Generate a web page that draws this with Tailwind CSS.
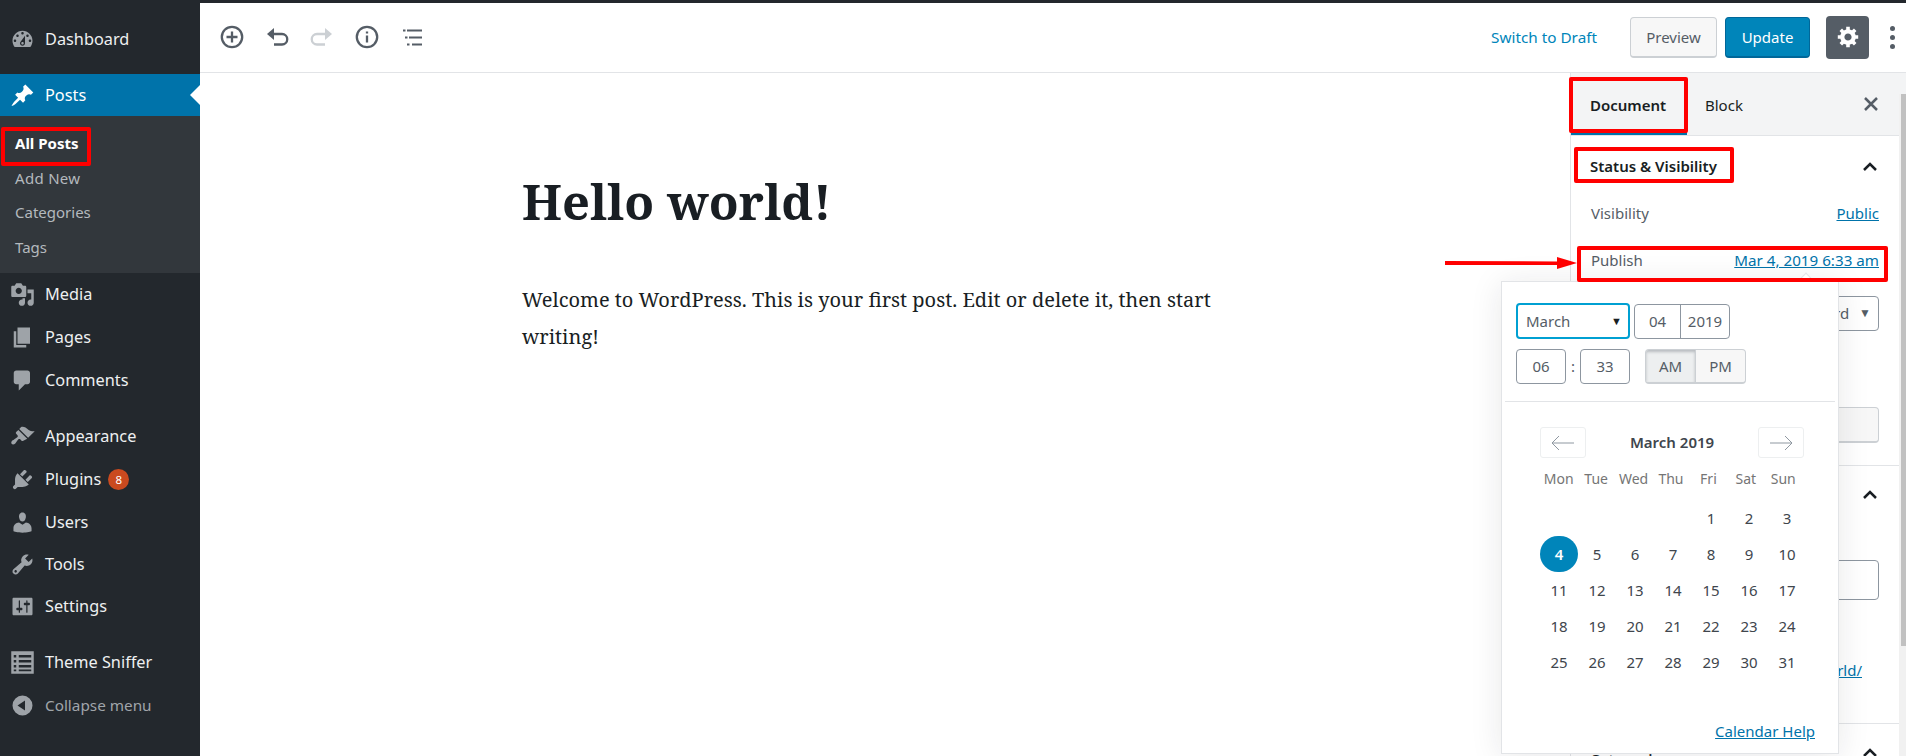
<!DOCTYPE html>
<html lang="en">
<head>
<meta charset="utf-8">
<title>Edit Post</title>
<script src="https://cdn.jsdelivr.net/npm/@tailwindcss/browser@4"></script>
</head>
<body class="m-0 overflow-hidden bg-white font-['Noto_Sans',sans-serif]">
<div class="relative flex h-[756px] w-[1906px] overflow-hidden">
  <!-- Admin menu -->
  <nav class="flex h-full w-[200px] shrink-0 flex-col bg-[#23282d] pt-[18px] text-[16.3px] text-[#eef0f1]">
    <a class="flex h-[42px] items-center"><span class="flex w-[45px] justify-center"><svg class="h-[25px] w-[25px] fill-[#9ea3a8]" viewBox="0 0 20 20"><path d="M3.76 16h12.48c1.1-1.37 1.76-3.11 1.76-5 0-4.42-3.58-8-8-8s-8 3.58-8 8c0 1.89.66 3.63 1.76 5zM10 4c.55 0 1 .45 1 1s-.45 1-1 1-1-.45-1-1 .45-1 1-1zM6 6c.55 0 1 .45 1 1s-.45 1-1 1-1-.45-1-1 .45-1 1-1zm8 0c.55 0 1 .45 1 1s-.45 1-1 1-1-.45-1-1 .45-1 1-1zm-5.37 5.55L12 7v6c0 1.1-.9 2-2 2s-2-.9-2-2c0-.57.24-1.08.63-1.45zM4 10c.55 0 1 .45 1 1s-.45 1-1 1-1-.45-1-1 .45-1 1-1zm12 0c.55 0 1 .45 1 1s-.45 1-1 1-1-.45-1-1 .45-1 1-1zm-5 3c0-.55-.45-1-1-1s-1 .45-1 1 .45 1 1 1 1-.45 1-1z"/></svg></span>Dashboard</a>
    <a class="relative mt-[14px] flex h-[42px] items-center bg-[#0073aa] text-white"><span class="flex w-[45px] justify-center"><svg class="h-[25px] w-[25px] fill-white" viewBox="0 0 20 20"><path d="M10.44 3.02l1.82-1.82 6.36 6.35-1.83 1.82c-1.05-.68-2.48-.57-3.41.36l-.75.75c-.92.93-1.04 2.35-.35 3.41l-1.83 1.82-2.41-2.41-2.8 2.79c-.42.42-3.38 2.71-3.8 2.29s1.86-3.39 2.28-3.81l2.79-2.79L4.1 9.36l1.83-1.82c1.05.69 2.48.57 3.4-.36l.75-.75c.93-.92 1.05-2.35.36-3.41z"/></svg></span>Posts<span class="absolute right-0 top-[11px] h-0 w-0 border-y-[10px] border-r-[10px] border-y-transparent border-r-white"></span></a>
    <div class="flex h-[157px] flex-col bg-[#32373c] pt-[10px] pl-[15px] text-[15px] text-[#b4b9be]">
      <a class="flex h-[34.7px] items-center font-bold text-white">All Posts</a>
      <a class="flex h-[34.7px] items-center tracking-[0.3px]">Add New</a>
      <a class="flex h-[34.7px] items-center">Categories</a>
      <a class="flex h-[34.7px] items-center">Tags</a>
    </div>
    <a class="flex h-[43px] items-center"><span class="flex w-[45px] justify-center"><svg class="h-[25px] w-[25px] fill-[#9ea3a8]" viewBox="0 0 20 20"><path d="M13 11V4c0-.55-.45-1-1-1h-1.67L9 1H5L3.67 3H2c-.55 0-1 .45-1 1v7c0 .55.45 1 1 1h10c.55 0 1-.45 1-1zM7 4.5c1.38 0 2.5 1.12 2.5 2.5S8.38 9.5 7 9.5 4.5 8.38 4.5 7 5.62 4.5 7 4.5zM14 6h5v10.5c0 1.38-1.12 2.5-2.5 2.5S14 17.88 14 16.5s1.12-2.5 2.5-2.5c.17 0 .34.02.5.05V9h-3V6zm-4 8.05V13h2v3.5c0 1.38-1.12 2.5-2.5 2.5S7 17.88 7 16.5 8.12 14 9.5 14c.17 0 .34.02.5.05z"/></svg></span>Media</a>
    <a class="flex h-[43px] items-center"><span class="flex w-[45px] justify-center"><svg class="h-[25px] w-[25px] fill-[#9ea3a8]" viewBox="0 0 20 20"><path d="M6 15V2h10v13H6zm-1 1h8v2H3V5h2v11z"/></svg></span>Pages</a>
    <a class="flex h-[42px] items-center"><span class="flex w-[45px] justify-center"><svg class="h-[25px] w-[25px] fill-[#9ea3a8]" viewBox="0 0 20 20"><path d="M5 2h9c1.1 0 2 .9 2 2v7c0 1.1-.9 2-2 2h-2l-5 5v-5H5c-1.1 0-2-.9-2-2V4c0-1.1.9-2 2-2z"/></svg></span>Comments</a>
    <a class="mt-[14px] flex h-[43px] items-center"><span class="flex w-[45px] justify-center"><svg class="h-[25px] w-[25px] fill-[#9ea3a8]" viewBox="0 0 20 20"><path d="M14.48 11.06L7.41 3.99l1.5-1.5c.5-.56 2.3-.47 3.51.32 1.21.8 1.43 1.28 2.91 2.1 1.18.64 2.45 1.26 4.45.85zm-.71.71L6.7 4.7 4.93 6.47c-.39.39-.39 1.02 0 1.41l1.06 1.06c.39.39.39 1.03 0 1.42-.6.6-1.43 1.11-2.21 1.69-.35.26-.7.53-1.01.84C1.43 13.23.4 14.96 1.5 16.06c.69.69 1.91.25 2.73-.55.31-.31.58-.66.85-1.02.57-.78 1.08-1.61 1.69-2.21.39-.39 1.02-.39 1.41 0l1.06 1.06c.39.39 1.02.39 1.41 0z"/></svg></span>Appearance</a>
    <a class="flex h-[43px] items-center"><span class="flex w-[45px] justify-center"><svg class="h-[25px] w-[25px] fill-[#9ea3a8]" viewBox="0 0 20 20"><path d="M13.11 4.36L9.87 7.6 8 5.73l3.24-3.24c.35-.34 1.05-.2 1.56.32.52.51.66 1.21.31 1.55zm-8 1.77l.91-1.12 9.01 9.01-1.19.84c-.71.71-2.63 1.16-3.82 1.16H6.14L4.9 17.26c-.59.59-1.54.59-2.12 0-.59-.58-.59-1.53 0-2.12l1.24-1.24v-3.88c0-1.13.4-3.19 1.09-3.89zm7.26 3.97l3.24-3.24c.34-.35 1.04-.21 1.55.31.52.51.66 1.21.31 1.55l-3.24 3.25z"/></svg></span>Plugins<span class="ml-[7px] flex h-[21px] w-[21px] items-center justify-center rounded-full bg-[#ca4a1f] text-[11.5px] text-white">8</span></a>
    <a class="flex h-[42px] items-center"><span class="flex w-[45px] justify-center"><svg class="h-[25px] w-[25px] fill-[#9ea3a8]" viewBox="0 0 20 20"><path d="M10 9.25c-2.27 0-2.73-3.44-2.73-3.44C7 4.02 7.82 2 9.97 2c2.16 0 2.98 2.02 2.71 3.81 0 0-.41 3.44-2.68 3.44zm0 2.57L12.72 10c2.39 0 4.52 2.33 4.52 4.53v2.49s-3.65 1.13-7.24 1.13c-3.65 0-7.24-1.13-7.24-1.13v-2.49c0-2.25 1.94-4.48 4.47-4.48z"/></svg></span>Users</a>
    <a class="flex h-[42px] items-center"><span class="flex w-[45px] justify-center"><svg class="h-[25px] w-[25px] fill-[#9ea3a8]" viewBox="0 0 20 20"><path d="M16.68 9.77c-1.34 1.34-3.3 1.67-4.95.99l-5.41 6.52c-.99.99-2.59.99-3.58 0s-.99-2.59 0-3.57l6.52-5.42c-.68-1.65-.35-3.61.99-4.95 1.28-1.28 3.12-1.62 4.72-1.06l-2.89 2.89 2.82 2.82 2.86-2.87c.53 1.58.18 3.39-1.08 4.65zM3.81 16.21c.4.39 1.04.39 1.43 0 .4-.4.4-1.04 0-1.43-.39-.4-1.03-.4-1.43 0-.39.39-.39 1.03 0 1.43z"/></svg></span>Tools</a>
    <a class="flex h-[43px] items-center"><span class="flex w-[45px] justify-center"><svg class="h-[25px] w-[25px] fill-[#9ea3a8]" viewBox="0 0 20 20"><path d="M18 16V4c0-.55-.45-1-1-1H3c-.55 0-1 .45-1 1v12c0 .55.45 1 1 1h14c.55 0 1-.45 1-1zM8 11h1c.55 0 1 .45 1 1s-.45 1-1 1H8v1.5c0 .28-.22.5-.5.5s-.5-.22-.5-.5V13H6c-.55 0-1-.45-1-1s.45-1 1-1h1V5.5c0-.28.22-.5.5-.5s.5.22.5.5V11zm5-2h-1c-.55 0-1-.45-1-1s.45-1 1-1h1V5.5c0-.28.22-.5.5-.5s.5.22.5.5V7h1c.55 0 1 .45 1 1s-.45 1-1 1h-1v5.5c0 .28-.22.5-.5.5s-.5-.22-.5-.5V9z"/></svg></span>Settings</a>
    <a class="mt-[13px] flex h-[43px] items-center"><span class="flex w-[45px] justify-center"><svg class="h-[25px] w-[25px] fill-[#9ea3a8]" viewBox="0 0 20 20" fill-rule="evenodd"><path d="M1 1h18v18H1zM3 4v2h2V4zm4 0v2h10V4zM3 8v2h2V8zm4 0v2h10V8zM3 12v2h2v-2zm4 0v2h10v-2zM3 15.5v1.5h2v-1.5zm4 0v1.500h10v-1.500z"/></svg></span>Theme Sniffer</a>
    <a class="flex h-[43px] items-center text-[15.3px] text-[#a0a5aa]"><span class="flex w-[45px] justify-center"><svg class="h-[25px] w-[25px] fill-[#9ea3a8]" viewBox="0 0 20 20" fill-rule="evenodd"><path d="M10 2a8 8 0 1 1 0 16 8 8 0 0 1 0-16zM12 6l-6 4 6 4z"/></svg></span>Collapse menu</a>
  </nav>

  <div class="flex min-w-0 flex-1 flex-col">
    <div class="h-[3px] shrink-0 bg-[#23282d]"></div>
    <!-- Toolbar -->
    <header class="flex h-[70px] shrink-0 items-center border-b border-[#e2e4e7] bg-white pb-[1px] pl-[20px] pr-[11px]">
      <div class="flex items-center gap-[21px]">
        <svg class="h-[24px] w-[24px] fill-none stroke-[#555d66] stroke-[2.300]" viewBox="0 0 24 24"><circle cx="12" cy="12" r="10.200"/><path d="M12 6.500v11M6.500 12h11"/></svg>
        <svg class="h-[24px] w-[24px] fill-none stroke-[#555d66] stroke-[2.300]" viewBox="0 0 24 24"><path d="M8 9h9a5.250 5.250 0 0 1 0 10.500H9"/><path class="fill-[#555d66] stroke-0" d="M9 3v12L2 9z"/></svg>
        <svg class="h-[24px] w-[24px] fill-none stroke-[#ccd0d4] stroke-[2.300]" viewBox="0 0 24 24"><path d="M16 9H7a5.250 5.250 0 0 0 0 10.500h8"/><path class="fill-[#ccd0d4] stroke-0" d="M15 3v12l7-6z"/></svg>
        <svg class="h-[24px] w-[24px] fill-none stroke-[#555d66] stroke-[2.300]" viewBox="0 0 24 24"><circle cx="12" cy="12" r="10.200"/><path d="M12 10.500v7M12 6.500v2"/></svg>
        <svg class="h-[24px] w-[24px] fill-none stroke-[#555d66] stroke-[1.800]" viewBox="0 0 24 24"><path d="M7 5.500h15M9 12.500h13M12 19.500h10M3 5.500h2.500M5 12.500h2.500M7 19.500h2.500"/></svg>
      </div>
      <div class="ml-auto flex items-center text-[15px]">
        <a class="mr-[33px] text-[15.3px] text-[#0085ba]">Switch to Draft</a>
        <button class="mr-[8px] h-[41px] w-[87px] rounded-[4px] border border-[#ccd0d4] border-b-2 bg-[#f7f7f7] pt-[1px] text-[#555d66]">Preview</button>
        <button class="mr-[16px] h-[41px] w-[85px] rounded-[4px] border border-[#006799] border-b-2 bg-[#0085ba] pt-[1px] text-white">Update</button>
        <span class="mr-[21px] flex h-[43px] w-[43px] items-center justify-center rounded-[4px] bg-[#555d66]"><svg class="h-[24px] w-[24px] fill-white" viewBox="0 0 20 20" fill-rule="evenodd"><path transform="translate(.5 -.5)" d="M18 12h-2.180c-.17.7-.44 1.350-.81 1.930l1.540 1.540-2.100 2.100-1.540-1.540c-.58.36-1.230.63-1.910.79V19H8v-2.180c-.68-.16-1.330-.43-1.910-.79l-1.540 1.540-2.120-2.120 1.540-1.540c-.36-.58-.63-1.230-.79-1.910H1V9.030h2.170c.16-.7.44-1.350.8-1.940L2.430 5.550l2.100-2.100 1.540 1.540c.58-.37 1.240-.64 1.930-.81V2h3v2.180c.68.16 1.330.43 1.910.79l1.540-1.540 2.120 2.120-1.540 1.540c.36.59.64 1.240.8 1.940H18V12zm-8.500 1.500c1.660 0 3-1.340 3-3s-1.340-3-3-3-3 1.340-3 3 1.340 3 3 3z"/></svg></span>
        <span class="flex flex-col gap-[4px]"><i class="block h-[5px] w-[5px] rounded-full bg-[#555d66]"></i><i class="block h-[5px] w-[5px] rounded-full bg-[#555d66]"></i><i class="block h-[5px] w-[5px] rounded-full bg-[#555d66]"></i></span>
      </div>
    </header>

    <div class="flex min-h-0 flex-1">
      <!-- Editor -->
      <main class="min-w-0 flex-1 pl-[322px] pt-[99px] font-['Noto_Serif','DejaVu_Serif_Condensed','DejaVu_Serif',serif] text-[#191e23]">
        <h1 class="text-[48.8px] font-bold leading-[1.2]">Hello world!</h1>
        <p class="mt-[50px] w-[720px] text-[20px] leading-[37px]">Welcome to WordPress. This is your first post. Edit or delete it, then start writing!</p>
      </main>
      <!-- Settings sidebar -->
      <aside class="flex w-[329px] shrink-0 flex-col border-l border-[#e2e4e7] bg-white text-[15px] text-[#555d66]">
        <div class="flex h-[63px] shrink-0 items-center border-b border-[#e2e4e7] bg-[#f3f4f5] pr-[18px]">
          <span class="flex h-[61px] w-[116px] items-center border-b-[3px] border-[#0073aa] pl-[19px] pt-[6px] font-semibold text-[#191e23]">Document</span>
          <span class="ml-[18px] mt-[2px] text-[#191e23]">Block</span>
          <svg class="ml-auto h-[20px] w-[20px] stroke-[#555d66] stroke-[2.500]" viewBox="0 0 20 20"><path d="M4 4l12 12M16 4L4 16"/></svg>
        </div>
        <div class="h-[330px] shrink-0 border-b border-[#e2e4e7] pl-[19px] pr-[20px] pt-[19px]">
          <div class="flex items-center justify-between"><b class="font-semibold text-[#191e23]">Status &amp; Visibility</b><svg class="h-[16px] w-[18px] fill-none stroke-[#191e23] stroke-[2.500]" viewBox="0 0 18 16"><path d="M3 12l6-6 6 6"/></svg></div>
          <div class="mt-[24px] flex justify-between pl-[1px]"><span>Visibility</span><a class="text-[#0073aa] underline">Public</a></div>
          <div class="mt-[25px] flex justify-between pl-[1px]"><span>Publish</span><a class="text-[15.2px] text-[#0073aa] underline">Mar 4, 2019 6:33 am</a></div>
          <div class="ml-auto mt-[24px] flex h-[35px] w-[60px] items-center justify-end rounded-[4px] border border-[#8d96a0] pr-[7px] text-[12px] text-[#555d66]"><span class="mr-[10px] text-[15px]">rd</span>▼</div>
          <div class="ml-auto mt-[76px] h-[36px] w-[60px] rounded-[4px] border border-[#ccd0d4] border-b-2 bg-[#f7f7f7]"></div>
        </div>
        <div class="h-[258px] shrink-0 border-b border-[#e2e4e7] pl-[19px] pr-[20px] pt-[20px]">
          <div class="flex justify-end"><svg class="h-[16px] w-[18px] fill-none stroke-[#191e23] stroke-[2.500]" viewBox="0 0 18 16"><path d="M3 12l6-6 6 6"/></svg></div>
          <div class="ml-auto mt-[58px] h-[40px] w-[60px] rounded-[4px] border border-[#8d96a0]"></div>
          <div class="mt-[59px] pr-[17px] text-right"><a class="text-[#0073aa] underline">rld/</a></div>
        </div>
        <div class="relative px-[19px] pt-[24px]"><span class="font-semibold text-[#191e23]">Categories</span><svg class="absolute right-[20px] top-[20px] h-[16px] w-[18px] fill-none stroke-[#191e23] stroke-[2.500]" viewBox="0 0 18 16"><path d="M3 12l6-6 6 6"/></svg></div>
      </aside>
      <!-- Scrollbar -->
      <div class="flex w-[7px] shrink-0 flex-col bg-[#f1f1f1]"><div class="h-[21px] bg-[#f3f4f5]"></div><div class="ml-[2px] h-[552px] bg-[#c1c1c1]"></div></div>
    </div>
  </div>

  <!-- Date-picker popover -->
  <div class="absolute left-[1501px] top-[281px] flex h-[473px] w-[338px] flex-col border border-[#e2e4e7] bg-white text-[15px] text-[#555d66] shadow-[0_3px_30px_rgba(25,30,35,0.1)]">
    <span class="absolute left-[298px] top-[-7px] h-[12px] w-[12px] rotate-45 border-l border-t border-[#e2e4e7] bg-white"></span>
    <div class="flex flex-col gap-[10px] px-[14px] pt-[21px]">
      <div class="flex h-[36px] items-center">
        <div class="flex h-[36px] w-[114px] items-center justify-between rounded-[4px] border-2 border-[#00a0d2] pl-[8px] pr-[6px]"><span>March</span><span class="text-[11px] text-[#191e23]">▼</span></div>
        <div class="ml-[4px] flex h-[35px] w-[96px] rounded-[4px] border border-[#8d96a0]"><span class="flex w-[46px] items-center justify-center border-r border-[#8d96a0]">04</span><span class="flex flex-1 items-center justify-center">2019</span></div>
      </div>
      <div class="flex h-[35px] items-center">
        <span class="flex h-[35px] w-[50px] items-center justify-center rounded-[4px] border border-[#8d96a0]">06</span>
        <span class="flex w-[14px] justify-center">:</span>
        <span class="flex h-[35px] w-[50px] items-center justify-center rounded-[4px] border border-[#8d96a0]">33</span>
        <span class="ml-[15px] flex h-[35px] w-[101px] overflow-hidden rounded-[4px] border border-[#ccd0d4] border-b-2 bg-[#f7f7f7]"><span class="flex w-[50px] items-center justify-center border-r border-[#ccd0d4] bg-[#edeff0] shadow-[inset_0_2px_3px_rgba(85,93,102,0.35)]">AM</span><span class="flex flex-1 items-center justify-center">PM</span></span>
      </div>
    </div>
    <div class="mx-[3px] mt-[17px] border-t border-[#e2e4e7]"></div>
    <div class="flex items-center justify-between pl-[38px] pr-[34px] pt-[25px]">
      <span class="flex h-[31px] w-[46px] items-center justify-center rounded-[3px] border border-[#edeff0]"><svg class="h-[16px] w-[24px] fill-none stroke-[#8f98a1]" viewBox="0 0 24 16"><path d="M1 8h22M8 1L1 8l7 7"/></svg></span>
      <b class="font-semibold text-[#40464d]">March 2019</b>
      <span class="flex h-[31px] w-[46px] items-center justify-center rounded-[3px] border border-[#edeff0]"><svg class="h-[16px] w-[24px] fill-none stroke-[#8f98a1]" viewBox="0 0 24 16"><path d="M23 8H1M16 1l7 7-7 7"/></svg></span>
    </div>
    <div class="ml-[38px] mr-[36px] mt-[9px] grid grid-cols-7 text-center text-[14px] leading-[24px] text-[#757575]"><span>Mon</span><span>Tue</span><span>Wed</span><span>Thu</span><span>Fri</span><span>Sat</span><span>Sun</span></div>
    <div class="ml-[38px] mr-[32px] mt-[9px] grid grid-cols-7 text-center text-[15px] leading-[36px] text-[#40464d]">
      <span></span><span></span><span></span><span></span><span>1</span><span>2</span><span>3</span>
      <span class="rounded-full bg-[#0085ba] font-semibold text-white">4</span><span>5</span><span>6</span><span>7</span><span>8</span><span>9</span><span>10</span>
      <span>11</span><span>12</span><span>13</span><span>14</span><span>15</span><span>16</span><span>17</span>
      <span>18</span><span>19</span><span>20</span><span>21</span><span>22</span><span>23</span><span>24</span>
      <span>25</span><span>26</span><span>27</span><span>28</span><span>29</span><span>30</span><span>31</span>
    </div>
    <a class="mb-[11px] mr-[23px] mt-auto text-right text-[#0073aa] underline">Calendar Help</a>
  </div>

  <!-- Red annotations -->
  <div class="pointer-events-none absolute left-[1px] top-[127px] h-[39px] w-[90px] rounded-[2px] border-[4px] border-[#ff0000]"></div>
  <div class="pointer-events-none absolute left-[1569px] top-[77px] h-[56px] w-[119px] rounded-[2px] border-[4px] border-[#ff0000]"></div>
  <div class="pointer-events-none absolute left-[1574px] top-[147px] h-[36px] w-[160px] rounded-[2px] border-[4px] border-[#ff0000]"></div>
  <div class="pointer-events-none absolute left-[1577px] top-[246px] h-[36px] w-[311px] rounded-[2px] border-[4px] border-[#ff0000]"></div>
  <svg class="pointer-events-none absolute left-[1445px] top-[255px] h-[16px] w-[132px]" viewBox="0 0 132 16"><path class="fill-[#ff0000]" d="M0 6L112 6.500V2l20 6-20 6V10L0 10z"/></svg>
</div>
</body>
</html>
